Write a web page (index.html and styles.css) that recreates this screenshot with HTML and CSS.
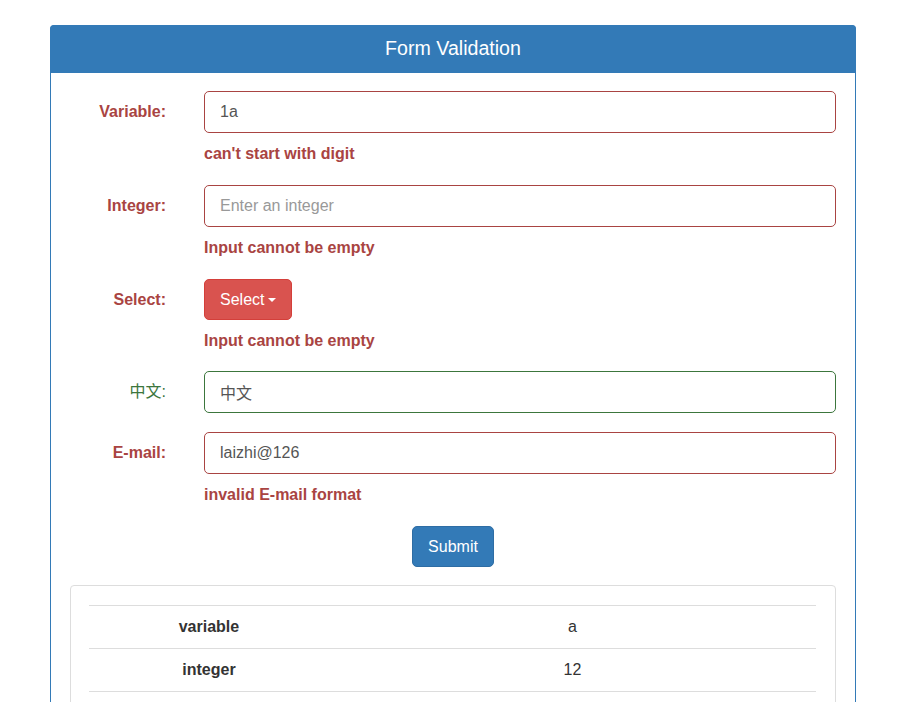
FILE: index.html
```html
<!DOCTYPE html>
<html>
<head>
<meta charset="utf-8">
<link rel="stylesheet" href="styles.css">
</head>
<body>
<div class="page">
  <div class="panel">
    <div class="panel-heading">Form Validation</div>
    <div class="panel-body">
      <div class="form-group error">
        <label class="label">Variable:</label>
        <div class="field">
          <input class="control" type="text" value="1a">
          <div class="help">can't start with digit</div>
        </div>
      </div>
      <div class="form-group error">
        <label class="label">Integer:</label>
        <div class="field">
          <input class="control" type="text" placeholder="Enter an integer">
          <div class="help">Input cannot be empty</div>
        </div>
      </div>
      <div class="form-group error tight">
        <label class="label">Select:</label>
        <div class="field">
          <button class="btn btn-danger" type="button">Select<span class="caret"></span></button>
          <div class="help">Input cannot be empty</div>
        </div>
      </div>
      <div class="form-group success">
        <label class="label">中文:</label>
        <div class="field">
          <input class="control" type="text" value="中文">
        </div>
      </div>
      <div class="form-group error">
        <label class="label">E-mail:</label>
        <div class="field">
          <input class="control" type="text" value="laizhi@126">
          <div class="help">invalid E-mail format</div>
        </div>
      </div>
      <div class="actions">
        <button class="btn btn-primary" type="button">Submit</button>
      </div>
      <div class="well">
        <table class="table">
          <tbody>
            <tr><th>variable</th><td>a</td></tr>
            <tr><th>integer</th><td>12</td></tr>
            <tr><th>select</th><td>1</td></tr>
            <tr><th>中文</th><td>中文</td></tr>
          </tbody>
        </table>
      </div>
    </div>
  </div>
</div>
</body>
</html>
```

FILE: styles.css
```css
html, body {
  margin: 0;
  padding: 0;
  background: #fff;
}
body {
  font-family: "Liberation Sans", Arial, "Noto Sans CJK SC", sans-serif;
  font-size: 16px;
  line-height: 1.42857;
  color: #333;
}
.page {
  padding: 25px 0 0 50px;
}
.panel {
  width: 806px;
  box-sizing: border-box;
  border: 1px solid #337ab7;
  border-radius: 4px;
  background: #fff;
}
.panel-heading {
  background: #337ab7;
  color: #fff;
  text-align: center;
  font-size: 19.6px;
  height: 48px;
  line-height: 47px;
  margin: -1px -1px 0 -1px;
  border-radius: 4px 4px 0 0;
}
.panel-body {
  padding: 18px 19px 20px 19px;
}
.form-group {
  display: flex;
  align-items: flex-start;
  margin-bottom: 20px;
}
.form-group.tight,
.form-group.success {
  margin-bottom: 19px;
}
.label {
  width: 96px;
  flex: none;
  text-align: right;
  font-weight: bold;
  line-height: 22px;
  padding-top: 10px;
  margin-right: 38px;
}
.error .label,
.error .help {
  color: #a94442;
}
.success .label {
  color: #3c763d;
  font-weight: normal;
}
.field {
  flex: 1;
}
.control {
  display: block;
  width: 100%;
  box-sizing: border-box;
  height: 42px;
  padding: 9px 15px;
  font-family: inherit;
  font-size: 16px;
  color: #555;
  background: #fff;
  border: 1px solid #ccc;
  border-radius: 5px;
  outline: none;
}
.control::placeholder {
  color: #999;
}
.error .control {
  border-color: #a94442;
}
.success .control {
  border-color: #3c763d;
}
.help {
  font-weight: bold;
  margin-top: 10px;
  line-height: 22px;
  height: 22px;
}
.btn {
  display: inline-block;
  height: 41px;
  padding: 0 15px;
  font-family: inherit;
  font-size: 16px;
  color: #fff;
  border-radius: 5px;
  border: 1px solid transparent;
  cursor: pointer;
}
.btn-danger {
  background: #d9534f;
  border-color: #d43f3a;
}
.btn-primary {
  background: #337ab7;
  border-color: #2e6da4;
}
.caret {
  display: inline-block;
  width: 0;
  height: 0;
  margin-left: 4px;
  vertical-align: middle;
  border-top: 4px solid #fff;
  border-left: 4px solid transparent;
  border-right: 4px solid transparent;
}
.actions {
  display: flex;
  justify-content: center;
  margin-bottom: 18px;
}
.well {
  border: 1px solid #ddd;
  border-radius: 4px;
  padding: 19px 19px 20px 18px;
}
.table {
  width: 100%;
  border-collapse: collapse;
}
.table th,
.table td {
  border-top: 1px solid #ddd;
  padding: 10px 8px;
  height: 22px;
  line-height: 22px;
  text-align: center;
}
.table th {
  width: 33%;
  font-weight: bold;
}
.table tr:last-child th,
.table tr:last-child td {
  border-bottom: 1px solid #ddd;
}
```
